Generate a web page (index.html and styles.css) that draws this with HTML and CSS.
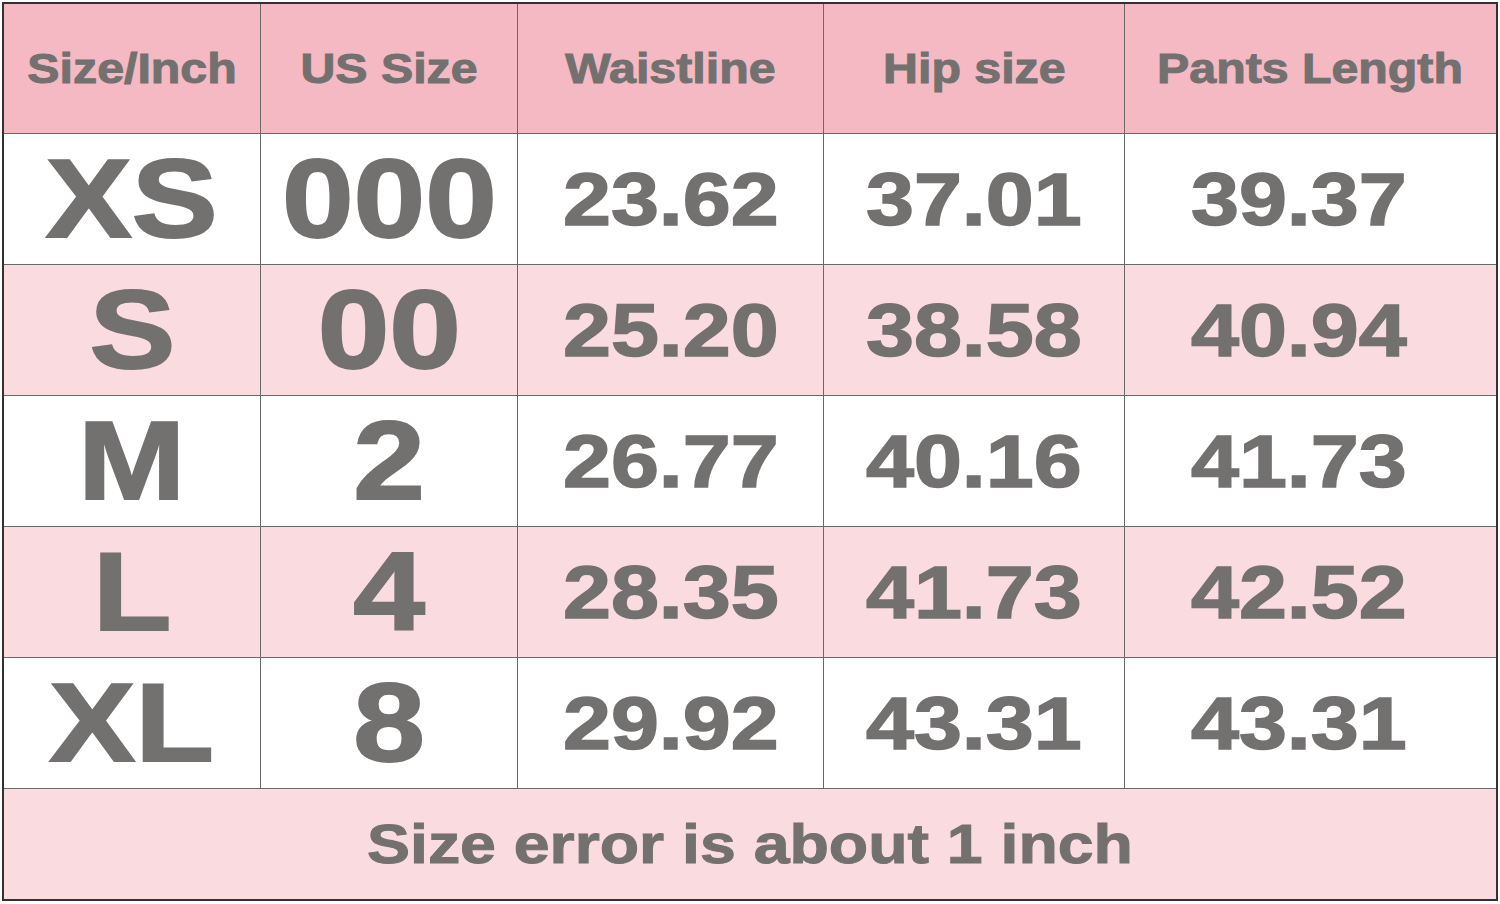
FILE: index.html
```html
<!DOCTYPE html>
<html>
<head>
<meta charset="utf-8">
<link rel="stylesheet" href="styles.css">
</head>
<body>
<div class="chart">
  <div class="cell head"><span class="t">Size/Inch</span></div>
  <div class="cell head"><span class="t">US Size</span></div>
  <div class="cell head"><span class="t">Waistline</span></div>
  <div class="cell head"><span class="t">Hip size</span></div>
  <div class="cell head"><span class="t">Pants Length</span></div>

  <div class="cell big"><span class="t">XS</span></div>
  <div class="cell big"><span class="t">000</span></div>
  <div class="cell num"><span class="t">23.62</span></div>
  <div class="cell num"><span class="t">37.01</span></div>
  <div class="cell num last"><span class="t">39.37</span></div>

  <div class="cell big alt"><span class="t">S</span></div>
  <div class="cell big alt"><span class="t">00</span></div>
  <div class="cell num alt"><span class="t">25.20</span></div>
  <div class="cell num alt"><span class="t">38.58</span></div>
  <div class="cell num alt last"><span class="t">40.94</span></div>

  <div class="cell big"><span class="t">M</span></div>
  <div class="cell big"><span class="t">2</span></div>
  <div class="cell num"><span class="t">26.77</span></div>
  <div class="cell num"><span class="t">40.16</span></div>
  <div class="cell num last"><span class="t">41.73</span></div>

  <div class="cell big alt"><span class="t">L</span></div>
  <div class="cell big alt"><span class="t">4</span></div>
  <div class="cell num alt"><span class="t">28.35</span></div>
  <div class="cell num alt"><span class="t">41.73</span></div>
  <div class="cell num alt last"><span class="t">42.52</span></div>

  <div class="cell big"><span class="t">XL</span></div>
  <div class="cell big"><span class="t">8</span></div>
  <div class="cell num"><span class="t">29.92</span></div>
  <div class="cell num"><span class="t">43.31</span></div>
  <div class="cell num last"><span class="t">43.31</span></div>

  <div class="cell foot"><span class="t">Size error is about 1 inch</span></div>
</div>
</body>
</html>
```

FILE: styles.css
```css
html, body {
  margin: 0;
  padding: 0;
  background: #ffffff;
}
body {
  padding: 2px 0 0 2px;
}
.chart {
  display: grid;
  grid-template-columns: 256px 256px 305px 300px 371px;
  grid-template-rows: 129px repeat(5, 130px) 110px;
  gap: 1px;
  width: 1492px;
  background: #6a6868;
  border: 2px solid #333131;
  font-family: "Liberation Sans", Arial, sans-serif;
  font-weight: bold;
  color: #737070;
}
.cell {
  display: flex;
  align-items: center;
  justify-content: center;
  background: #ffffff;
  overflow: hidden;
}
.t {
  display: inline-block;
  transform: scaleX(1.15);
  white-space: nowrap;
  line-height: 1;
}
.head {
  background: #f4b9c2;
  font-size: 42px;
  -webkit-text-stroke: 1px #737070;
}
.alt {
  background: #fadbe0;
}
.big {
  font-size: 112px;
  -webkit-text-stroke: 2px #737070;
}
.num {
  font-size: 75px;
  -webkit-text-stroke: 1.5px #737070;
}
.last {
  padding-right: 24px;
}
.foot {
  grid-column: 1 / -1;
  background: #fadbe0;
  font-size: 56px;
  -webkit-text-stroke: 1px #737070;
}
```
